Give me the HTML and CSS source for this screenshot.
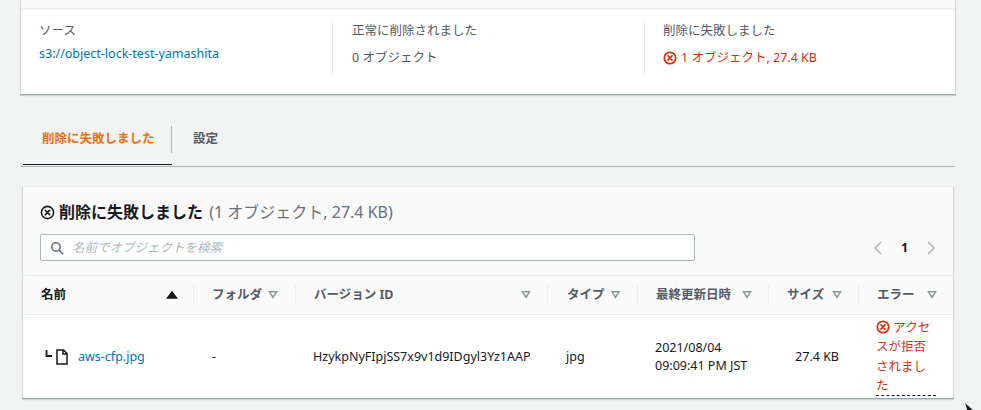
FILE: index.html
```html
<!DOCTYPE html>
<html lang="ja">
<head>
<meta charset="utf-8">
<title>削除に失敗しました</title>
<link rel="stylesheet" href="styles.css">
</head>
<body>
<section class="summary">
  <div class="summary-top"></div>
  <div class="columns">
    <div class="col col-first">
      <div class="label">ソース</div>
      <a class="link source">s3://object-lock-test-yamashita</a>
    </div>
    <div class="col">
      <div class="label">正常に削除されました</div>
      <div class="value">0 オブジェクト</div>
    </div>
    <div class="col">
      <div class="label">削除に失敗しました</div>
      <div class="value error">
        <svg class="x-icon" viewBox="0 0 16 16"><circle cx="8" cy="8" r="6.5"/><path d="M5.7 5.7l4.6 4.6M10.3 5.7l-4.6 4.6"/></svg>1 オブジェクト, 27.4 KB
      </div>
    </div>
  </div>
</section>

<nav class="tabs">
  <div class="tab active">削除に失敗しました</div>
  <div class="tab">設定</div>
</nav>

<section class="panel">
  <header class="panel-head">
    <h2 class="title">
      <svg class="x-icon title-icon" viewBox="0 0 16 16"><circle cx="8" cy="8" r="6.5"/><path d="M5.7 5.7l4.6 4.6M10.3 5.7l-4.6 4.6"/></svg>削除に失敗しました <span class="count">(1 オブジェクト, 27.4 KB)</span>
    </h2>
    <div class="tools">
      <div class="search">
        <svg class="search-icon" viewBox="0 0 16 16"><circle cx="6.8" cy="6.8" r="4.8"/><path d="M10.4 10.4l4.2 4.2"/></svg>
        <span class="placeholder">名前でオブジェクトを検索</span>
      </div>
      <div class="pager">
        <svg class="chev" viewBox="0 0 10 14"><path d="M8 1L2 7l6 6"/></svg>
        <span class="page">1</span>
        <svg class="chev" viewBox="0 0 10 14"><path d="M2 1l6 6-6 6"/></svg>
      </div>
    </div>
  </header>
  <table class="grid">
    <colgroup>
      <col class="c1"><col class="c2"><col class="c3"><col class="c4"><col class="c5"><col class="c6"><col class="c7">
    </colgroup>
    <thead>
      <tr>
        <th class="first"><div class="th"><span class="th-text dark">名前</span><i class="sort-up"></i></div></th>
        <th class="h-folder"><div class="th"><span class="th-text">フォルダ</span><i class="sort"></i></div></th>
        <th class="h-wide"><div class="th"><span class="th-text">バージョン ID</span><i class="sort"></i></div></th>
        <th class="h-type"><div class="th"><span class="th-text">タイプ</span><i class="sort"></i></div></th>
        <th class="h-wide"><div class="th"><span class="th-text">最終更新日時</span><i class="sort"></i></div></th>
        <th class="h-wide"><div class="th"><span class="th-text">サイズ</span><i class="sort"></i></div></th>
        <th class="h-wide"><div class="th"><span class="th-text">エラー</span><i class="sort"></i></div></th>
      </tr>
    </thead>
    <tbody>
      <tr>
        <td class="first">
          <div class="file">
            <svg class="tree" viewBox="0 0 8 8"><path d="M1.5 0v6H7"/></svg>
            <svg class="doc" viewBox="0 0 12 16"><path d="M1 1h6.5L11 4.5V15H1zM7 1v4h4"/></svg>
            <a class="link">aws-cfp.jpg</a>
          </div>
        </td>
        <td class="folder">-</td>
        <td class="version">HzykpNyFIpjSS7x9v1d9IDgyl3Yz1AAP</td>
        <td class="type">jpg</td>
        <td class="date">2021/08/04<br>09:09:41 PM JST</td>
        <td class="size">27.4 KB</td>
        <td class="err-cell">
          <div class="err-text"><svg class="x-icon" viewBox="0 0 16 16"><circle cx="8" cy="8" r="6.5"/><path d="M5.7 5.7l4.6 4.6M10.3 5.7l-4.6 4.6"/></svg> アクセスが拒否されました</div>
        </td>
      </tr>
    </tbody>
  </table>
</section>
<svg class="cursor" viewBox="0 0 10 12"><path d="M0 0l9 8H5l-1 4z"/></svg>
</body>
</html>
```
FILE: styles.css
```css
* { box-sizing: border-box; }
html, body { height: 100%; }
body {
  margin: 0;
  height: 410px;
  overflow: hidden;
  position: relative;
  background: #f2f3f3;
  color: #16191f;
  font-family: "Noto Sans", "Noto Sans CJK JP", sans-serif;
  font-size: 12.5px;
  line-height: 20px;
}
.link { color: #0073bb; }

.summary {
  margin-left: 20px;
  width: 936px;
  height: 95px;
  background: #fff;
  border-right: 1px solid #d5dbdb;
  border-left: 1px solid #d5dbdb;
  border-bottom: 1px solid #9aa5ad;
  box-shadow: 0 1px 1px rgba(0, 28, 36, .15);
}
.summary-top {
  height: 9px;
  background: #fafafa;
  border-bottom: 1px solid #eaeded;
}
.columns {
  display: grid;
  grid-template-columns: 311px 312px 1fr;
  padding-top: 13px;
}
.col {
  height: 54px;
  border-left: 1px solid #eaeded;
  padding-left: 19px;
}
.col-first { border-left: 0; padding-left: 18px; }
.col:last-child { padding-left: 18px; }
.label { color: #545b64; height: 20px; line-height: 20px; margin-top: -1px; }
.source { display: block; margin-top: 3px; }
.value { margin-top: 7px; color: #545b64; display: flex; align-items: center; }
.value.error, .err-text { color: #d13212; }
.x-icon {
  width: 14px;
  height: 14px;
  fill: none;
  stroke: currentColor;
  stroke-width: 2;
  stroke-linecap: round;
  flex: none;
}
.value .x-icon { margin-right: 4px; }

.tabs {
  margin-left: 21px;
  width: 934px;
  height: 72px;
  padding: 31px 0 0 2px;
  display: flex;
  border-bottom: 1px solid #aab7b8;
}
.tab {
  height: 39px;
  padding: 0 20px 0 21px;
  font-weight: 700;
  color: #545b64;
  line-height: 26px;
}
.tab.active {
  width: 149px;
  padding: 0 0 0 19px;
  color: #ec7211;
  border-bottom: 1px solid #16191f;
  position: relative;
}
.tab.active::after {
  content: "";
  position: absolute;
  right: 0;
  top: 0;
  height: 27px;
  border-right: 1px solid #aab7b8;
}

.panel {
  margin: 19px 0 0 22px;
  width: 932px;
  height: 213px;
  background: #fff;
  border-left: 1px solid #d5dbdb;
  border-right: 1px solid #d5dbdb;
  border-bottom: 1px solid #9aa5ad;
  box-shadow: 0 1px 1px rgba(0, 28, 36, .15);
}
.panel-head {
  height: 90px;
  background: #fafafa;
  border-top: 1px solid #eaeded;
  border-bottom: 1px solid #eaeded;
  padding: 14px 0 0 17px;
}
.title {
  margin: 0;
  font-size: 16px;
  line-height: 22px;
  font-weight: 700;
  color: #16191f;
  display: block;
}
.title-icon { width: 15px; height: 15px; margin-right: 4px; vertical-align: -2px; stroke-width: 1.7; }
.count { font-weight: 400; color: #687078; font-size: 16px; margin-left: 2px; }
.tools { display: flex; align-items: center; margin-top: 11px; }
.search {
  width: 655px;
  height: 27px;
  background: #fff;
  border: 1px solid #aab7b8;
  border-radius: 2px;
  display: flex;
  align-items: center;
  padding-left: 9px;
}
.search-icon { width: 14px; height: 14px; fill: none; stroke: #687078; stroke-width: 1.8; stroke-linecap: round; }
.placeholder { margin-left: 8px; font-style: italic; color: #aab7b8; }
.pager { display: flex; align-items: center; margin-left: 178px; }
.chev { width: 10px; height: 14px; fill: none; stroke: #aab7b8; stroke-width: 1.6; }
.page { font-weight: 700; width: 43px; text-align: center; }

.grid {
  width: 930px;
  table-layout: fixed;
  border-collapse: collapse;
}
.c1 { width: 170px; }
.c2 { width: 102px; }
.c3 { width: 252px; }
.c4 { width: 90px; }
.c5 { width: 131px; }
.c6 { width: 90px; }
.c7 { width: 95px; }
th {
  height: 38px;
  padding: 0;
  background: #fafafa;
  border-bottom: 1px solid #eaeded;
  text-align: left;
  vertical-align: middle;
}
.th {
  height: 19px;
  display: flex;
  align-items: center;
  border-left: 1px solid #eaeded;
  padding: 0 16px 0 18px;
}
.first .th { border-left: 0; padding-left: 18px; justify-content: space-between; padding-right: 15px; }
.th-text { color: #545b64; font-weight: 700; white-space: nowrap; }
.th-text.dark { color: #16191f; }
.h-wide .th { justify-content: space-between; }
.h-folder .th, .h-type .th { gap: 6px; }
.h-type .th { padding-left: 19px; }
.sort {
  width: 10px;
  height: 8px;
  flex: none;
  background: #879596;
  clip-path: polygon(0 0, 100% 0, 50% 100%, 0 0, 25% 22%, 50% 62%, 75% 22%, 25% 22%);
}
.sort-up {
  width: 12px;
  height: 8px;
  flex: none;
  background: #16191f;
  clip-path: polygon(50% 0, 100% 100%, 0 100%);
}
td {
  height: 84px;
  padding: 2px 0 0 19px;
  vertical-align: middle;
  background: #fff;
}
td.first { padding-left: 22px; }
.file { display: flex; align-items: center; }
.tree { width: 8px; height: 8px; fill: none; stroke: #16191f; stroke-width: 1.8; margin: -6px 3px 0 0; }
.doc { width: 12px; height: 16px; fill: #fff; stroke: #16191f; stroke-width: 1.5; margin-right: 10px; }
.folder { padding-left: 19px; }
.version { padding-left: 18px; white-space: nowrap; }
.type { padding-left: 19px; }
.date { padding-left: 18px; line-height: 18px; }
.size { padding: 2px 19px 0 0; text-align: right; }
.err-cell { padding: 0 0 0 18px; vertical-align: top; position: relative; }
.err-text {
  width: 60px;
  line-height: 19.5px;
  margin-top: 3px;
  height: 78px;
  overflow: hidden;
}
.err-text .x-icon { vertical-align: -2px; }
.err-cell::after {
  content: "";
  position: absolute;
  left: 18px;
  bottom: 2px;
  width: 60px;
  border-bottom: 1px dashed #16191f;
}
.cursor {
  position: absolute;
  left: 965px;
  top: 403px;
  width: 9px;
  height: 11px;
  fill: #16191f;
}
```
